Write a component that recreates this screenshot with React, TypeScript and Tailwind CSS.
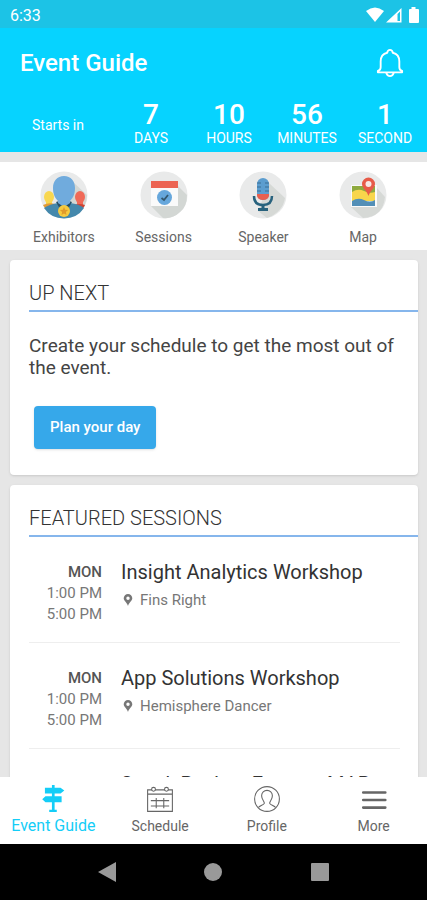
import React, { useState } from 'react';

const countdown = [
  { value: '7', label: 'DAYS' },
  { value: '10', label: 'HOURS' },
  { value: '56', label: 'MINUTES' },
  { value: '1', label: 'SECOND' },
];

const sessions = [
  { id: 1, day: 'MON', start: '1:00 PM', end: '5:00 PM', title: 'Insight Analytics Workshop', room: 'Fins Right' },
  { id: 2, day: 'MON', start: '1:00 PM', end: '5:00 PM', title: 'App Solutions Workshop', room: 'Hemisphere Dancer' },
  { id: 3, title: 'Sneak Peek at Express MAP' },
];

const ExhibitorsIcon = () => (
  <svg viewBox="0 0 48 48" className="w-12 h-12" aria-hidden="true">
    <circle cx="24" cy="24" r="23.5" fill="#e9eaea" />
    <path d="M32 10 47 24a23.5 23.5 0 0 1-10 19L24 40z" fill="#d3d7d4" />
    <ellipse cx="9" cy="26" rx="5" ry="6" fill="#f8d750" />
    <path d="M6 28h6v7H6z" fill="#f8d750" />
    <path d="M3 34q6-3 12-1l-2 8Q6 40 3 34z" fill="#e39a35" />
    <ellipse cx="40" cy="26" rx="5" ry="6" fill="#f06a58" />
    <path d="M37 29h6v6h-6z" fill="#f06a58" />
    <path d="M33 34q7-2 12 0-2 5-8 8z" fill="#cf4534" />
    <path d="M4 37q6-4 14-5h12q9 1 14 5-7 10.5-20 10.5T4 37z" fill="#4488ac" />
    <path d="m16 31 3-1 5 6 5-6 3 1-4 7h-8z" fill="#254f67" />
    <path d="M24 5c7 0 11 5 11 12 0 6-2 10-5 13v2l-6 4-6-4v-2c-3-3-5-7-5-13C13 10 17 5 24 5z" fill="#70abdd" />
    <circle cx="24" cy="40" r="6" fill="#f5ca3f" />
    <path d="m24 36 1.2 2.7 2.9.3-2.2 2 .6 2.9-2.5-1.5-2.5 1.5.6-2.9-2.2-2 2.9-.3z" fill="#e09a2b" />
  </svg>
);

const SessionsIcon = () => (
  <svg viewBox="0 0 48 48" className="w-12 h-12" aria-hidden="true">
    <circle cx="24" cy="24" r="23.5" fill="#e9eaea" />
    <path d="m38 15 9 9q0 12-7 17-7 7-17 6L11 35z" fill="#d3d7d4" />
    <path d="M11 17h27v18H11z" fill="#fafafa" />
    <path d="M11 10h27v7H11z" fill="#ec6453" />
    <circle cx="24.5" cy="26.5" r="7.5" fill="#66a7dc" />
    <path d="m21.5 27 2.5 2 4-5" fill="none" stroke="#34576d" strokeWidth="1.8" />
  </svg>
);

const SpeakerIcon = () => (
  <svg viewBox="0 0 48 48" className="w-12 h-12" aria-hidden="true">
    <circle cx="24" cy="24" r="23.5" fill="#e9eaea" />
    <path d="M30 12 46 27q-2 14-18 20l-9-7z" fill="#d6d9d6" />
    <path d="M15 25q0 9 9 9t9-9" fill="none" stroke="#28627d" strokeWidth="2.5" />
    <path d="M22.5 34h3v4h-3zM19 37h10v3H19z" fill="#28627d" />
    <rect x="18" y="7" width="12" height="22" rx="6" fill="#5b9dcf" />
    <path d="M18 12h4M18 16h4M18 20h4M26 12h4M26 16h4M26 20h4" stroke="#3a6f94" strokeWidth="1.2" />
    <path d="M18 25h12q-1 4-6 4t-6-4z" fill="#e75f4f" />
    <path d="M18 23h12v2H18z" fill="#e75f4f" />
  </svg>
);

const MapIcon = () => (
  <svg viewBox="0 0 48 48" className="w-12 h-12" aria-hidden="true">
    <circle cx="24" cy="24" r="23.5" fill="#e9eaea" />
    <path d="m38 17 8 9q-2 20-22 21L12 36z" fill="#d6d9d6" />
    <path d="M12 14h26v22H12z" fill="#fafafa" />
    <path d="M13 15h23v9H13z" fill="#8faa3f" />
    <path d="M13 21q6-4 12-1t11 1v9H13z" fill="#f8d64b" />
    <path d="M13 30q6-4 12-1t11 0v6H13z" fill="#528fb7" />
    <path d="M29.5 25C28 20 23 17 23 13a6.5 6.5 0 0 1 13 0C36 17 31 20 29.5 25z" fill="#e75a48" />
    <circle cx="29.5" cy="13" r="3" fill="#f6e8e5" />
  </svg>
);

const shortcuts = [
  { label: 'Exhibitors', Icon: ExhibitorsIcon },
  { label: 'Sessions', Icon: SessionsIcon },
  { label: 'Speaker', Icon: SpeakerIcon },
  { label: 'Map', Icon: MapIcon },
];

const SignpostIcon = () => (
  <svg viewBox="0 0 26 26" className="w-7 h-7" fill="currentColor" aria-hidden="true">
    <path d="M12 0h2.5v24H12z" />
    <path d="M5.5 2.5H20L23.5 5 20 8H5.5zM6 10.5h15V16H6l-3-2.7zM9.5 23h7v2h-7z" />
  </svg>
);

const CalendarIcon = () => (
  <svg viewBox="0 0 26 26" className="w-7 h-7" fill="none" stroke="currentColor" aria-hidden="true">
    <path d="M5.5 4.5h-4v20h23v-20h-4M8.5 4.5h9M1.5 8.5h23" />
    <circle cx="7" cy="4" r="1.8" />
    <circle cx="19" cy="4" r="1.8" />
    <path d="M4.5 14.5h17M4.5 19.5h17M9.5 12v9.5M16.5 12v9.5" />
  </svg>
);

const ProfileIcon = () => (
  <svg viewBox="0 0 26 26" className="w-7 h-7" fill="none" stroke="currentColor" aria-hidden="true">
    <circle cx="13" cy="13" r="11.5" />
    <path d="M5 21c1-2 5-2.5 5.5-4 .4-1.5-2.5-3-2.5-7a5 5 0 0 1 10 0c0 4-2.9 5.5-2.5 7 .5 1.5 4.5 2 5.5 4" />
  </svg>
);

const MoreIcon = () => (
  <svg viewBox="0 0 26 26" className="w-7 h-7" stroke="currentColor" strokeWidth="2.4" strokeLinecap="round" aria-hidden="true">
    <path d="M3 7h20.5M3 14h20.5M3 21h20.5" />
  </svg>
);

const tabs = [
  { label: 'Event Guide', Icon: SignpostIcon },
  { label: 'Schedule', Icon: CalendarIcon },
  { label: 'Profile', Icon: ProfileIcon },
  { label: 'More', Icon: MoreIcon },
];

const StatusBar = () => (
  <div className="flex h-7 items-center justify-between bg-[#1cc3e6] pl-[10px] pr-1 text-white">
    <span className="pt-1 text-base leading-6">6:33</span>
    <div className="flex items-center gap-[2px] pt-[2px]">
      <svg viewBox="0 0 18 16" className="w-[18px] h-4" fill="currentColor" aria-hidden="true">
        <path d="M0 4q9-7 18 0L9 15z" />
      </svg>
      <svg viewBox="0 0 17 16" className="w-[17px] h-4" fill="currentColor" aria-hidden="true">
        <path d="M0 15.5 15.5 1v14.5zM11.5 7v7H14V4.6z" fillRule="evenodd" />
      </svg>
      <svg viewBox="0 0 18 18" className="w-[18px] h-[18px]" fill="currentColor" aria-hidden="true">
        <path d="M6.5 1h4v2H13q1 0 1 1v12q0 1-1 1H5q-1 0-1-1V4q0-1 1-1h1.5z" />
      </svg>
    </div>
  </div>
);

const Header = () => (
  <header className="bg-[#06d3ff] text-white">
    <div className="flex h-[70px] items-center justify-between pl-5 pr-[23px]">
      <h1 className="text-2xl leading-7 font-medium">Event Guide</h1>
      <button type="button" aria-label="Notifications">
        <svg viewBox="0 0 30 32" className="w-7 h-[30px]" fill="none" stroke="currentColor" strokeWidth="2" strokeLinejoin="round" aria-hidden="true">
          <path d="M2 26h26v-1.5q-3-1-3-4v-6q0-8-7-9.5-.5-3-3-3t-3 3Q5 6.5 5 14.5v6q0 3-3 4z" />
          <path d="M11 26.5q1 3.5 4 3.5t4-3.5" />
        </svg>
      </button>
    </div>
    <div className="flex h-[54px] items-start pr-[3px]">
      <p className="w-28 shrink-0 pl-1 pt-[17px] text-center text-sm leading-5">Starts in</p>
      <div className="grid flex-1 grid-cols-4">
        {countdown.map((item) => (
          <div key={item.label} className="flex flex-col items-center pt-[2px]">
            <span className="text-[28px] leading-[30px] font-medium">{item.value}</span>
            <span className="text-sm leading-4">{item.label}</span>
          </div>
        ))}
      </div>
    </div>
  </header>
);

const Shortcuts = () => (
  <nav className="mt-[10px] grid h-[88px] grid-cols-4 bg-white px-[14px] pt-[9px]">
    {shortcuts.map(({ label, Icon }) => (
      <button key={label} type="button" className="flex flex-col items-center gap-2 text-[#666]">
        <Icon />
        <span className="text-sm leading-5">{label}</span>
      </button>
    ))}
  </nav>
);

const App: React.FC = () => {
  const [activeTab, setActiveTab] = useState('Event Guide');

  return (
    <div className="flex h-screen flex-col bg-[#e6e6e6] font-['Roboto',sans-serif]">
      <StatusBar />
      <Header />

      <main className="min-h-0 flex-1 overflow-hidden">
        <Shortcuts />

        <section className="ml-[10px] mr-[9px] mt-[10px] rounded-sm bg-white pb-[26px] pl-[19px] pt-[19px] shadow-sm">
          <h2 className="border-b-2 border-[#86b6ec] pb-[3px] text-xl leading-7 font-light text-[#333]">UP NEXT</h2>
          <p className="mt-[23px] pr-5 text-[19px] leading-[22px] text-[#444]">
            Create your schedule to get the most out of the event.
          </p>
          <button
            type="button"
            className="ml-[5px] mt-[27px] h-[43px] rounded-sm bg-[#36a8ea] px-4 text-[15px] font-medium text-white shadow-sm"
          >
            Plan your day
          </button>
        </section>

        <section className="ml-[10px] mr-[9px] mt-[10px] rounded-sm bg-white pl-[19px] pt-[19px] shadow-sm">
          <h2 className="border-b-2 border-[#86b6ec] pb-[3px] text-xl leading-7 font-light text-[#333]">FEATURED SESSIONS</h2>
          <ul className="mr-[18px]">
            {sessions.map((session) => (
              <li key={session.id} className="flex gap-[19px] border-b border-[#eee] pb-[17px] pt-[23px]">
                <div className="w-[73px] pt-[2px] text-right text-[15px] leading-[21px] text-[#777]">
                  <p className="font-medium text-[#555]">{session.day}</p>
                  <p>{session.start}</p>
                  <p>{session.end}</p>
                </div>
                <div className="min-w-0 flex-1">
                  <h3 className="whitespace-nowrap text-xl leading-6 text-[#333]">{session.title}</h3>
                  {session.room && (
                    <p className="mt-[6px] flex items-center gap-[7px] pl-[2px] text-[15px] leading-5 text-[#777]">
                      <svg viewBox="0 0 10 14" className="w-[10px] h-3" fill="currentColor" aria-hidden="true">
                        <path d="M5 14C4 10 0 8 0 5a5 5 0 0 1 10 0c0 3-4 5-5 9zM5 3a2 2 0 1 0 0 4 2 2 0 0 0 0-4z" fillRule="evenodd" />
                      </svg>
                      {session.room}
                    </p>
                  )}
                </div>
              </li>
            ))}
          </ul>
        </section>
      </main>

      <nav className="grid h-[67px] grid-cols-4 bg-white pt-2">
        {tabs.map(({ label, Icon }) => (
          <button
            key={label}
            type="button"
            onClick={() => setActiveTab(label)}
            className={`flex flex-col items-center gap-[3px] ${activeTab === label ? 'text-[#14cdf7]' : 'text-[#666]'}`}
          >
            <Icon />
            <span className={activeTab === label ? 'text-base leading-5' : 'text-sm leading-5'}>{label}</span>
          </button>
        ))}
      </nav>

      <div className="flex h-14 items-center justify-around bg-black px-[54px] text-[#999]">
        <button type="button" aria-label="Back">
          <svg viewBox="0 0 20 20" className="w-5 h-5" fill="currentColor" aria-hidden="true">
            <path d="M1 10 19 0v20z" />
          </svg>
        </button>
        <button type="button" aria-label="Home">
          <svg viewBox="0 0 20 20" className="w-5 h-5" fill="currentColor" aria-hidden="true">
            <circle cx="10" cy="10" r="9" />
          </svg>
        </button>
        <button type="button" aria-label="Recent apps">
          <svg viewBox="0 0 20 20" className="w-5 h-5" fill="currentColor" aria-hidden="true">
            <rect x="1" y="1" width="18" height="18" rx="1" />
          </svg>
        </button>
      </div>
    </div>
  );
};

export default App;
